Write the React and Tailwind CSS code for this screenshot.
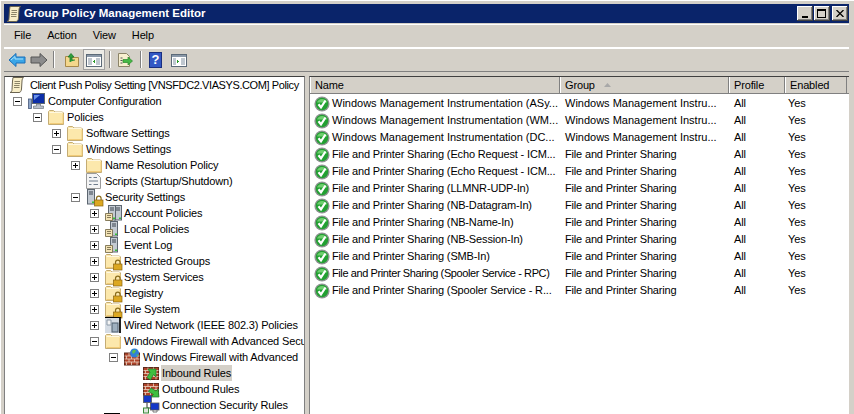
const rules = [
  ['Windows Management Instrumentation (ASy...', 'Windows Management Instru...'],
  ['Windows Management Instrumentation (WM...', 'Windows Management Instru...'],
  ['Windows Management Instrumentation (DC...', 'Windows Management Instru...'],
  ['File and Printer Sharing (Echo Request - ICM...', 'File and Printer Sharing'],
  ['File and Printer Sharing (Echo Request - ICM...', 'File and Printer Sharing'],
  ['File and Printer Sharing (LLMNR-UDP-In)', 'File and Printer Sharing'],
  ['File and Printer Sharing (NB-Datagram-In)', 'File and Printer Sharing'],
  ['File and Printer Sharing (NB-Name-In)', 'File and Printer Sharing'],
  ['File and Printer Sharing (NB-Session-In)', 'File and Printer Sharing'],
  ['File and Printer Sharing (SMB-In)', 'File and Printer Sharing'],
  ['File and Printer Sharing (Spooler Service - RPC)', 'File and Printer Sharing'],
  ['File and Printer Sharing (Spooler Service - R...', 'File and Printer Sharing'],
]

const tree = [
  { level: 0, exp: '-', icon: 'computer', text: 'Computer Configuration' },
  { level: 1, exp: '-', icon: 'folder', text: 'Policies' },
  { level: 2, exp: '+', icon: 'folder', text: 'Software Settings' },
  { level: 2, exp: '-', icon: 'folder', text: 'Windows Settings' },
  { level: 3, exp: '+', icon: 'folder', text: 'Name Resolution Policy' },
  { level: 3, icon: 'script', text: 'Scripts (Startup/Shutdown)' },
  { level: 3, exp: '-', icon: 'serverlock', text: 'Security Settings' },
  { level: 4, exp: '+', icon: 'servers', text: 'Account Policies' },
  { level: 4, exp: '+', icon: 'server', text: 'Local Policies' },
  { level: 4, exp: '+', icon: 'server', text: 'Event Log' },
  { level: 4, exp: '+', icon: 'folderlock', text: 'Restricted Groups' },
  { level: 4, exp: '+', icon: 'folderlock', text: 'System Services' },
  { level: 4, exp: '+', icon: 'folderlock', text: 'Registry' },
  { level: 4, exp: '+', icon: 'folderlock', text: 'File System' },
  { level: 4, exp: '+', icon: 'wired', text: 'Wired Network (IEEE 802.3) Policies' },
  { level: 4, exp: '-', icon: 'folder', text: 'Windows Firewall with Advanced Security' },
  { level: 5, exp: '-', icon: 'firewall', text: 'Windows Firewall with Advanced' },
  { level: 6, icon: 'inbound', text: 'Inbound Rules', selected: true },
  { level: 6, icon: 'outbound', text: 'Outbound Rules' },
  { level: 6, icon: 'connection', text: 'Connection Security Rules' },
]

function Scroll() {
  return (
    <svg viewBox="0 0 16 16" className="h-4 w-4 shrink-0">
      <path d="M4 .5h10.500c-1 1-1.500 2-1.500 3.500l-.5 8c-.2 2-1 3.500-2.500 3.500H1c1.500-.5 2-1.500 2-3l.5-8.500C3.600 2.500 4 1.500 4 .5z" fill="#f8eec8" stroke="#6b6450" />
      <path d="M5.500 4.500h5.500M5.500 6.500h5.500M5 8.500h5.500M5 10.500h5.500" stroke="#8b8468" />
    </svg>
  )
}

function FolderShape() {
  return (
    <g>
      <path d="M.5 15.500V2.500l1-1h4l1.500 1.500h7.500l1 1v11.500z" fill="#fce8ac" stroke="#c4ac74" />
      <path d="M1.500 3.500h13" stroke="#fff8e0" />
      <path d="M1.500 14.500h13.500V5" stroke="#f2cc78" fill="none" />
    </g>
  )
}

function Lock() {
  return (
    <g>
      <path d="M10.500 11V9.500a2.300 2.300 0 0 1 4.600 0V11" fill="none" stroke="#8a6d1c" strokeWidth="1.200" />
      <rect x="8.500" y="11" width="8.500" height="6" fill="#dca822" stroke="#8a6412" strokeWidth=".7" />
    </g>
  )
}

function Bricks() {
  return (
    <g>
      <rect x=".5" y="3.500" width="15" height="12" fill="#b0442a" stroke="#5e2a1c" />
      <path d="M.5 6.500h15M.5 9.500h15M.5 12.500h15M5 3.500v3M10.500 3.500v3M2.500 6.500v3M7.500 6.500v3M13 6.500v3M5 9.500v3M10.500 9.500v3M2.500 12.500v3M7.500 12.500v3M13 12.500v3" stroke="#e8d4c4" strokeWidth=".8" />
    </g>
  )
}

function Server({ x = 4 }) {
  return (
    <g transform={`translate(${x} 0)`}>
      <rect x=".5" y=".5" width="7" height="14.500" fill="#c3cad2" stroke="#5c6670" />
      <path d="M2 3h4M2 5h4" stroke="#38424e" />
      <rect x="5" y="12.500" width="2" height="1.500" fill="#35c435" />
    </g>
  )
}

function Note() {
  return <path d="M.5 8.500h7v7h-7z M2 10.500h4M2 12.500h4" fill="#f3e3b5" stroke="#7b6f4e" strokeWidth=".9" />
}

function TreeIcon({ name }) {
  if (name === 'folder') {
    return <svg viewBox="0 0 16 16" className="h-4 w-4"><FolderShape /></svg>
  }
  if (name === 'folderlock') {
    return (
      <svg viewBox="0 0 16 16" className="h-4 w-4 overflow-visible">
        <FolderShape />
        <Lock />
      </svg>
    )
  }
  if (name === 'computer') {
    return (
      <svg viewBox="0 0 17 16" className="h-4 w-[17px] overflow-visible">
        <rect x=".5" y="6" width="3" height="9.500" fill="#8ea6c8" stroke="#46587a" strokeWidth=".8" />
        <rect x="4.500" y=".5" width="12" height="10" fill="#0c2ea8" stroke="#5c6670" />
        <path d="M6 2h6l-6 5z" fill="#6a92e8" />
        <path d="M8.500 11h4v2h3v2.500h-10V13h3z" fill="#b9c0ca" stroke="#5c6670" strokeWidth=".6" />
      </svg>
    )
  }
  if (name === 'script') {
    return (
      <svg viewBox="0 0 16 16" className="h-4 w-4">
        <path d="M.5.5h10l4 4v11H.5z" fill="#f4f4f4" stroke="#9a9a9a" />
        <path d="M3 4.500h2.500M7.500 4.500H11M3 8h9M3 11.500h2.500M7.500 11.500H12" stroke="#6f7c8c" />
      </svg>
    )
  }
  if (name === 'serverlock') {
    return (
      <svg viewBox="0 0 16 16" className="h-4 w-4 overflow-visible">
        <Server x={1} />
        <Lock />
      </svg>
    )
  }
  if (name === 'servers') {
    return (
      <svg viewBox="0 0 16 16" className="h-4 w-4 overflow-visible">
        <Server x={9} />
        <Server x={3} />
        <Note />
      </svg>
    )
  }
  if (name === 'server') {
    return (
      <svg viewBox="0 0 16 16" className="h-4 w-4 overflow-visible">
        <Server x={5} />
        <Note />
      </svg>
    )
  }
  if (name === 'wired') {
    return (
      <svg viewBox="0 0 16 16" className="h-4 w-4">
        <rect width="16" height="16" fill="#d5dce4" />
        <path d="M0 .5h16" stroke="#000" />
        <path d="M15 1v15" stroke="#222" strokeWidth="2" />
        <rect x="7" y="6" width="6" height="9" fill="#9fb0bf" stroke="#4f5f6f" />
        <path d="M2 3h4v5H2z" fill="#f5f5f5" stroke="#8c9aa8" />
      </svg>
    )
  }
  if (name === 'firewall') {
    return (
      <svg viewBox="0 0 16 16" className="h-4 w-4 overflow-visible">
        <g transform="translate(0 .5)"><Bricks /></g>
        <circle cx="10.500" cy="4" r="4.500" fill="#2f7fd8" />
        <path d="M8 2.500c1-2 3-2 4-1l-1 2-2 1.500zM12 6l2.500-1-1 2.500z" fill="#5cc04c" />
      </svg>
    )
  }
  if (name === 'inbound' || name === 'outbound') {
    return (
      <svg viewBox="0 0 16 16" className="h-4 w-4 overflow-visible">
        <g transform="translate(0 -1)"><Bricks /></g>
        {name === 'inbound' ? (
          <path d="M5 4h8v8l-2.500-2.500-3 5.500-3.500-2.500 3-5z" fill="#3fbf3f" stroke="#1c7a2c" strokeWidth=".7" />
        ) : (
          <path d="M16 16H8l2.500-2.500-5-3 2.500-3.500 5 3L15 8z" fill="#3fbf3f" stroke="#1c7a2c" strokeWidth=".7" />
        )}
      </svg>
    )
  }
  return (
    <svg viewBox="0 0 16 16" className="h-4 w-4 overflow-visible">
      <rect x=".5" y="-1.500" width="8" height="7" fill="#1438c8" stroke="#555" strokeWidth=".8" />
      <rect x="7.500" y="6" width="8.500" height="7" fill="#1438c8" stroke="#555" strokeWidth=".8" />
      <path d="M4 6v5h4" fill="none" stroke="#333" />
      <rect x=".5" y="11" width="5" height="5" fill="#dfe6dc" stroke="#3a8a3a" />
      <path d="M10 13v2h4v-2" stroke="#777" fill="none" />
    </svg>
  )
}

function Expander({ sign }) {
  return (
    <svg viewBox="0 0 9 9" className="h-[9px] w-[9px]" shapeRendering="crispEdges">
      <rect x=".5" y=".5" width="8" height="8" fill="#fff" stroke="#808080" />
      <path d="M2 4.500h5" stroke="#000" />
      {sign === '+' && <path d="M4.500 2v5" stroke="#000" />}
    </svg>
  )
}

function TreeRow({ item }) {
  const indents = ['pl-[8px]', 'pl-[28px]', 'pl-[47px]', 'pl-[66px]', 'pl-[85px]', 'pl-[104px]', 'pl-[123px]']
  return (
    <div className={`flex h-4 shrink-0 items-center ${indents[item.level]}`}>
      <span className="flex h-4 w-[10px] shrink-0 items-center">
        {item.exp && <Expander sign={item.exp} />}
      </span>
      <span className="ml-[5px] flex shrink-0 justify-center">
        <TreeIcon name={item.icon} />
      </span>
      <span className={`ml-[2px] h-4 whitespace-nowrap px-[1px] leading-[16px] ${item.selected ? 'bg-[#d4d0c8]' : ''}`}>
        {item.text}
      </span>
    </div>
  )
}

function Check() {
  return (
    <svg viewBox="0 0 16 16" className="h-4 w-4 shrink-0">
      <circle cx="8" cy="8" r="7.600" fill="#8f9492" />
      <circle cx="8" cy="8" r="6.200" fill="#22a032" />
      <path d="M3 6.500a5.300 5.300 0 0 1 10 0z" fill="#6fcf6f" />
      <path d="M4.500 8.300l2.500 3 4.500-6.800" fill="none" stroke="#fff" strokeWidth="2.200" />
    </svg>
  )
}

function HeaderCell({ className, children }) {
  return (
    <div className={`flex h-full shrink-0 items-center border-r border-r-[#808080] pl-[5px] shadow-[inset_1px_0_0_#fff] ${className}`}>
      {children}
    </div>
  )
}

function Toolbar() {
  const sep = <span className="mx-[4px] block h-[17px] w-[2px] border-r border-r-white bg-[#808080]" />
  return (
    <div className="flex h-[24px] items-center border-b border-b-[#808080] pl-[3px] shadow-[inset_0_1px_0_#fff]">
      <svg viewBox="0 0 18 16" className="ml-[1px] h-4 w-[18px]">
        <path d="M1 8l7-6.500V5h9v6H8v3.500z" fill="#3aa6e8" stroke="#1b6fb8" />
        <path d="M3 8l4-3.500V7h8" fill="none" stroke="#a8e0fa" />
      </svg>
      <svg viewBox="0 0 18 16" className="ml-[4px] h-4 w-[18px]">
        <path d="M17 8l-7-6.500V5H1v6h9v3.500z" fill="#8c8c8c" stroke="#555" />
      </svg>
      <span className="ml-[1px]">{sep}</span>
      <svg viewBox="0 0 16 16" className="ml-[5px] h-4 w-4">
        <path d="M1.500 14.500v-10h4l1 1h8v9z" fill="#f4d78c" stroke="#a8894a" />
        <path d="M6 10V5H4l3-3.500L10 5H8v3h3" fill="#2f9f3a" stroke="#1b7a2c" strokeWidth=".8" />
      </svg>
      <span className="ml-[3px] flex h-[21px] w-[22px] items-center justify-center border border-[#a0a0a0] bg-[#ecebe6]">
        <svg viewBox="0 0 16 16" className="h-4 w-4" shapeRendering="crispEdges">
          <rect x=".5" y="2.500" width="15" height="12" fill="#fff" stroke="#5c6a78" />
          <path d="M1 3.500h14M1 4.500h14" stroke="#8a98a8" />
          <rect x="2" y="6" width="4" height="7" fill="#c0c8d0" />
          <rect x="10" y="6" width="4" height="7" fill="#c0c8d0" />
          <path d="M9 7v5L7 9.500z" fill="#2a9a2a" />
        </svg>
      </span>
      <span>{sep}</span>
      <svg viewBox="0 0 16 16" className="ml-[2px] h-4 w-4">
        <path d="M1.500 1.500h8l3 3v10h-11z" fill="#f8efcf" stroke="#8c8468" />
        <path d="M3.500 6h2M3.500 8.500h2M3.500 11h2" stroke="#555" />
        <path d="M6 7.500h5V5l4.500 4-4.500 4v-2.500H6z" fill="#46b846" stroke="#2a8a2a" strokeWidth=".7" />
      </svg>
      <span className="ml-[3px]">{sep}</span>
      <span className="ml-[3px] flex h-[16px] w-[13px] items-center justify-center border border-[#1a2f80] bg-[#3358c4] text-[13px] font-bold leading-none text-white">
        ?
      </span>
      <svg viewBox="0 0 16 16" className="ml-[9px] h-4 w-4" shapeRendering="crispEdges">
        <rect x=".5" y="2.500" width="15" height="12" fill="#fff" stroke="#5c6a78" />
        <path d="M1 3.500h14M1 4.500h14" stroke="#8a98a8" />
        <rect x="2" y="6" width="3" height="7" fill="#c0c8d0" />
        <rect x="10" y="6" width="4" height="7" fill="#c0c8d0" />
        <path d="M6 7v5l2-2.500z" fill="#2a9a2a" />
      </svg>
    </div>
  )
}

function WinButton({ children }) {
  return (
    <span className="flex h-[15px] w-[16px] items-center justify-center border-b border-r border-b-[#404040] border-r-[#404040] bg-[#d4d0c8] shadow-[inset_1px_1px_0_#fff,inset_-1px_-1px_0_#808080]">
      {children}
    </span>
  )
}

export default function App() {
  return (
    <div className="flex h-[414px] w-[854px] flex-col overflow-hidden bg-[#d4d0c8] pl-[4px] pr-[5px] pt-[4px] font-['Liberation_Sans',sans-serif] text-[11px] tracking-[-0.15px] text-black shadow-[inset_1px_1px_0_#fff]">
      {/* заголовок окна */}
      <div className="flex h-[19px] shrink-0 items-center bg-[#0a246a] pl-[2px] pr-[1px] tracking-normal text-white">
        <Scroll />
        <span className="ml-[2px] text-[11.500px] font-bold">Group Policy Management Editor</span>
        <span className="ml-auto flex items-center gap-[1px]">
          <WinButton><span className="mt-[7px] h-[2px] w-[6px] bg-black" /></WinButton>
          <WinButton><span className="h-[9px] w-[9px] border border-t-2 border-black" /></WinButton>
          <span className="ml-[1px]">
            <WinButton>
              <svg viewBox="0 0 8 7" className="h-[7px] w-[8px]"><path d="M.5 0l7 7M7.500 0l-7 7" stroke="#000" strokeWidth="1.300" /></svg>
            </WinButton>
          </span>
        </span>
      </div>

      {/* меню */}
      <div className="mt-[1px] flex h-[24px] shrink-0 items-center gap-[16px] border-b border-b-white pl-[10px] shadow-[inset_0_1px_0_#fff]">
        <span>File</span>
        <span>Action</span>
        <span>View</span>
        <span>Help</span>
      </div>
      <Toolbar />

      {/* панели */}
      <div className="mt-[4px] flex min-h-0 flex-1 gap-[4px]">
        <div className="w-[301px] shrink-0 overflow-hidden border-l border-r border-t border-l-[#808080] border-r-[#808080] border-t-[#404040] bg-white">
          <div className="flex h-4 items-center pl-[4px]">
            <Scroll />
            <span className="ml-[5px] whitespace-nowrap tracking-[-0.4px]">Client Push Polisy Setting [VNSFDC2.VIASYS.COM] Policy</span>
          </div>
          {tree.map((item) => (
            <TreeRow key={item.text} item={item} />
          ))}
          <div className="flex h-4 pl-[99px]">
            <TreeIcon name="wired" />
          </div>
        </div>

        <div className="min-w-0 flex-1 overflow-hidden border-l border-t border-l-[#808080] border-t-[#404040] bg-white">
          <div className="flex h-[17px] items-center border-b border-b-[#808080] bg-[#d4d0c8]">
            <HeaderCell className="w-[250px]">Name</HeaderCell>
            <HeaderCell className="relative w-[169px]">
              Group
              <svg viewBox="0 0 7 4" className="absolute left-[44px] top-[6px] h-1 w-[7px]"><path d="M3.500 0L7 4H0z" fill="#a8a8a8" /></svg>
            </HeaderCell>
            <HeaderCell className="w-[56px]">Profile</HeaderCell>
            <HeaderCell className="w-[62px]">Enabled</HeaderCell>
          </div>
          <div className="pt-[1px]">
            {rules.map(([name, group], i) => (
              <div key={i} className="flex h-[17px] items-center">
                <div className={`flex w-[255px] shrink-0 items-center gap-[2px] whitespace-nowrap pl-[4px] ${name.startsWith('Windows') ? 'tracking-normal' : name.endsWith('RPC)') ? 'tracking-[-0.4px]' : 'tracking-[-0.15px]'}`}>
                  <Check />
                  {name}
                </div>
                <div className={`w-[169px] shrink-0 whitespace-nowrap ${group.endsWith('...') ? 'tracking-normal' : 'tracking-[-0.17px]'}`}>{group}</div>
                <div className="w-[54px] shrink-0">All</div>
                <div>Yes</div>
              </div>
            ))}
          </div>
        </div>
      </div>
    </div>
  )
}
